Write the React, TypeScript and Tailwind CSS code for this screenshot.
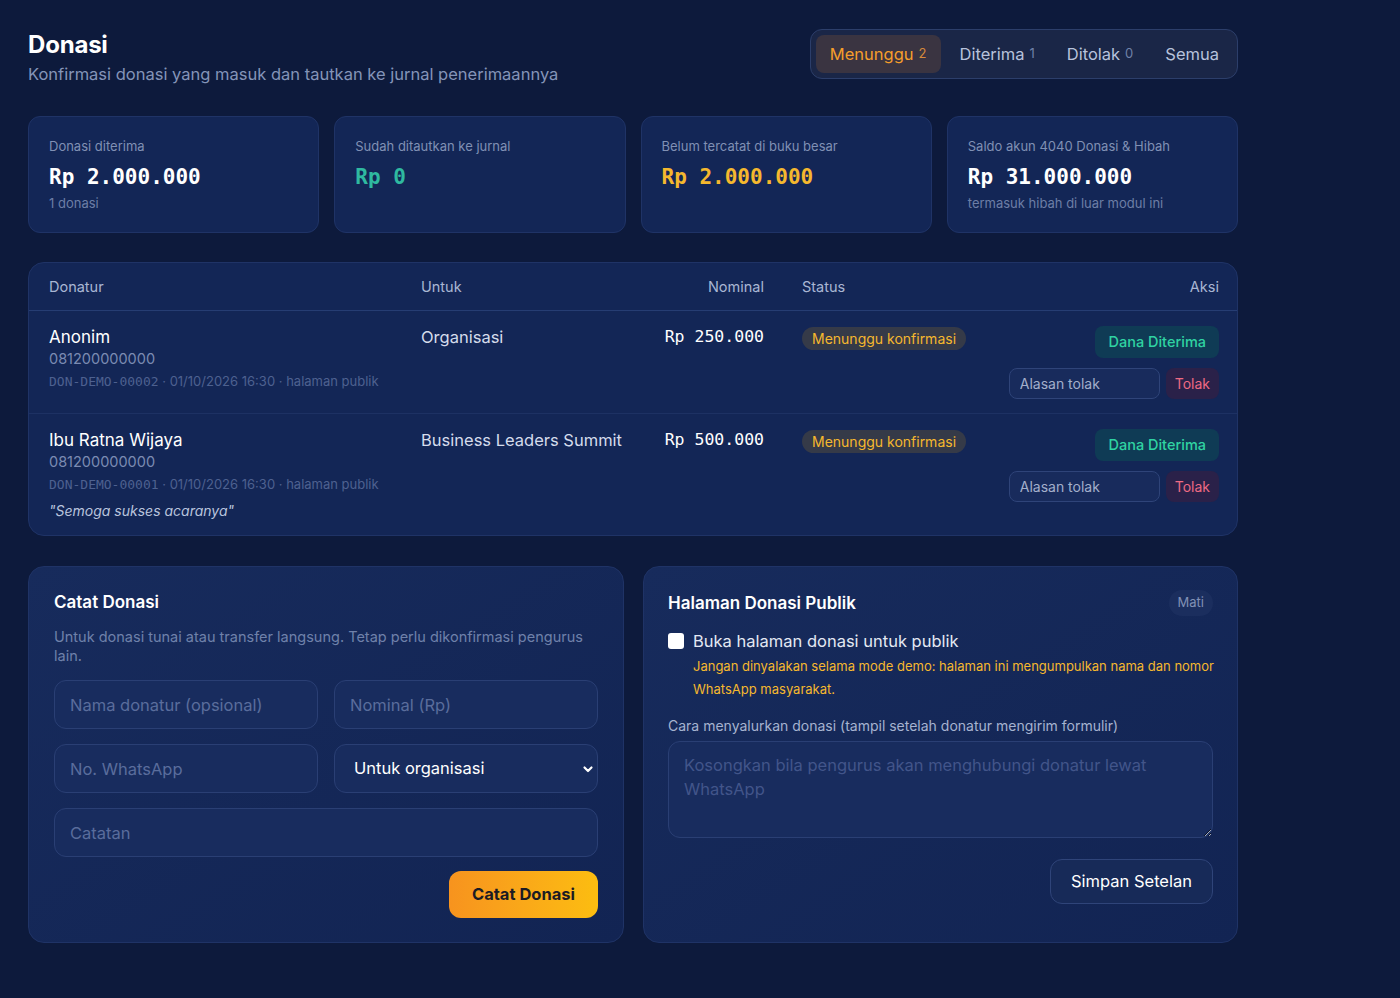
import React from "react";

const sans = { fontFamily: "Inter, 'Noto Sans', sans-serif" };
const mono = "font-['DejaVu_Sans_Mono',monospace]";

const tabs = [
  { label: "Menunggu", count: "2", active: true },
  { label: "Diterima", count: "1" },
  { label: "Ditolak", count: "0" },
  { label: "Semua", count: "" },
];

const stats = [
  { label: "Donasi diterima", value: "Rp 2.000.000", color: "text-white", sub: "1 donasi" },
  { label: "Sudah ditautkan ke jurnal", value: "Rp 0", color: "text-[#2fb9a0]", sub: "" },
  { label: "Belum tercatat di buku besar", value: "Rp 2.000.000", color: "text-[#f5b82e]", sub: "" },
  { label: "Saldo akun 4040 Donasi & Hibah", value: "Rp 31.000.000", color: "text-white", sub: "termasuk hibah di luar modul ini" },
];

const rows = [
  { name: "Anonim", phone: "081200000000", id: "DON-DEMO-00002", untuk: "Organisasi", nominal: "Rp 250.000", note: "" },
  { name: "Ibu Ratna Wijaya", phone: "081200000000", id: "DON-DEMO-00001", untuk: "Business Leaders Summit", nominal: "Rp 500.000", note: "\"Semoga sukses acaranya\"" },
];

const gridCols = "grid grid-cols-[372px_243px_140px_207px_248px]";

const inputCls =
  "h-[49px] w-full rounded-xl border border-[#2a3f74] bg-[#182c5e] px-[15px] text-[16.5px] text-white placeholder:text-[#5a6d9c] outline-none";

export default function App() {
  return (
    <div style={sans} className="min-h-[998px] bg-[#0d1a3c] px-[28px] pt-[29px] pb-10 text-white">
      <div className="w-[1210px]">
        {/* header */}
        <div className="flex items-start justify-between">
          <div className="pt-[1px]">
            <h1 className="text-[24px] font-bold leading-[30px] tracking-[-0.2px]">Donasi</h1>
            <p className="mt-[2px] text-[16.5px] leading-[24px] text-[#8494b8]">
              Konfirmasi donasi yang masuk dan tautkan ke jurnal penerimaannya
            </p>
          </div>
          <div className="flex h-[50px] items-center gap-[6px] rounded-xl border border-[#2c3e6a] bg-[#1a2647] px-[5px]">
            {tabs.map((t) => (
              <div
                key={t.label}
                className={
                  t.active
                    ? "flex h-[38px] items-center rounded-lg bg-[#3a3441] px-[14px] text-[16.5px] text-[#f59e2b]"
                    : "flex h-[38px] items-center px-[13px] text-[16.5px] text-[#b7c2dc]"
                }
              >
                {t.label}
                {t.count && (
                  <span className={t.active ? "ml-[5px] text-[13px] text-[#d68a3a]" : "ml-[5px] text-[13px] text-[#7081a8]"}>
                    {t.count}
                  </span>
                )}
              </div>
            ))}
          </div>
        </div>

        {/* stats */}
        <div className="mt-[30px] grid grid-cols-4 gap-[15px]">
          {stats.map((s) => (
            <div key={s.label} className="h-[117px] rounded-xl border border-[#1f3366] bg-[#132656] px-[20px] pt-[20px]">
              <div className="text-[13px] leading-[18px] text-[#8090b4]">{s.label}</div>
              <div className={`mt-[7px] text-[21px] font-bold leading-[30px] ${mono} ${s.color}`}>{s.value}</div>
              {s.sub && <div className="mt-[2px] text-[13px] leading-[18px] text-[#6d7ea6]">{s.sub}</div>}
            </div>
          ))}
        </div>

        {/* table */}
        <div className="mt-[29px] overflow-hidden rounded-2xl border border-[#1f3366] bg-[#132656]">
          <div className={`${gridCols} h-[48px] items-center border-b border-[#263d73] text-[14.5px] text-[#a9b6d3]`}>
            <div className="px-5">Donatur</div>
            <div className="px-5">Untuk</div>
            <div className="px-5 text-right">Nominal</div>
            <div className="pl-[18px] pr-5">Status</div>
            <div className="px-5 text-right">Aksi</div>
          </div>
          {rows.map((r, i) => (
            <div key={r.id} className={`${gridCols} py-[14px] ${i === 0 ? "border-b border-[#1d3163]" : ""}`}>
              <div className="px-5">
                <div className="text-[17px] leading-[24px] text-white">{r.name}</div>
                <div className="text-[14.5px] leading-[20px] text-[#7b8bb2]">{r.phone}</div>
                <div className="mt-[2px] text-[13px] leading-[20px] text-[#4e6190]">
                  <span className={mono}>{r.id}</span> · 01/10/2026 16:30 · halaman publik
                </div>
                {r.note && <div className="mt-[6px] text-[14px] italic leading-[20px] text-[#b9c4dd]">{r.note}</div>}
              </div>
              <div className="whitespace-nowrap pl-5 text-[16.5px] leading-[24px] text-[#d5dcec]">{r.untuk}</div>
              <div className={`px-5 text-right text-[16.5px] leading-[24px] text-white ${mono}`}>{r.nominal}</div>
              <div className="pl-[18px] pr-5 pt-[1px]">
                <span className="inline-flex h-[23px] items-center rounded-full bg-[#353a48] px-[10px] text-[14px] text-[#f5b82e]">
                  Menunggu konfirmasi
                </span>
              </div>
              <div className="flex flex-col items-end px-5 pt-[1px]">
                <button className="h-[32px] rounded-lg bg-[#0f3b55] px-[13px] text-[14.5px] font-medium text-[#2fd3a2]">
                  Dana Diterima
                </button>
                <div className="mt-[10px] flex gap-[6px]">
                  <input
                    placeholder="Alasan tolak"
                    className="h-[31px] w-[151px] rounded-lg border border-[#2f4479] bg-[#182b5c] px-[10px] text-[14px] text-white placeholder:text-[#a3afcb] outline-none"
                  />
                  <button className="h-[31px] rounded-lg bg-[#2a2149] px-[9px] text-[14px] text-[#ee6a83]">Tolak</button>
                </div>
              </div>
            </div>
          ))}
        </div>

        {/* bottom cards */}
        <div className="mt-[30px] grid grid-cols-[596px_595px] gap-[19px]">
          <div className="h-[377px] rounded-2xl border border-[#1f3366] bg-gradient-to-br from-[#172b5c] to-[#122453] px-[25px] pt-[23px]">
            <h2 className="text-[17px] font-semibold leading-[24px]">Catat Donasi</h2>
            <p className="mt-[13px] text-[14.5px] leading-[19px] text-[#6f81aa]">
              Untuk donasi tunai atau transfer langsung. Tetap perlu dikonfirmasi pengurus lain.
            </p>
            <div className="mt-[15px] grid grid-cols-2 gap-x-[16px] gap-y-[15px]">
              <input placeholder="Nama donatur (opsional)" className={inputCls} />
              <input placeholder="Nominal (Rp)" className={inputCls} />
              <input placeholder="No. WhatsApp" className={inputCls} />
              <div className="relative">
                <select className={`${inputCls} appearance-none pl-[19px]`} defaultValue="org">
                  <option value="org">Untuk organisasi</option>
                </select>
                <svg
                  className="pointer-events-none absolute right-[4px] top-1/2 -translate-y-1/2"
                  width="12"
                  height="12"
                  viewBox="0 0 12 12"
                  fill="none"
                  stroke="white"
                  strokeWidth="2.2"
                  strokeLinecap="round"
                  strokeLinejoin="round"
                >
                  <path d="M2.5 4.5 6 8l3.5-3.5" />
                </svg>
              </div>
              <input placeholder="Catatan" className={`${inputCls} col-span-2`} />
            </div>
            <div className="mt-[14px] flex justify-end">
              <button className="h-[47px] rounded-xl bg-gradient-to-r from-[#f7931e] to-[#fcbd10] px-[23px] text-[16.5px] font-bold text-[#1b1b24]">
                Catat Donasi
              </button>
            </div>
          </div>

          <div className="h-[377px] rounded-2xl border border-[#1f3366] bg-gradient-to-br from-[#172b5c] to-[#122453] px-[24px] pt-[23px]">
            <div className="flex items-center justify-between">
              <h2 className="text-[17px] font-semibold leading-[24px]">Halaman Donasi Publik</h2>
              <span className="rounded-full bg-[#1b2e5e] px-[9px] py-[3px] text-[13px] text-[#8191b5]">Mati</span>
            </div>
            <label className="mt-[13px] flex items-center gap-[9px]">
              <span className="h-[16px] w-[16px] rounded-[3px] bg-white" />
              <span className="text-[16.5px] leading-[24px] text-[#e3e8f3]">Buka halaman donasi untuk publik</span>
            </label>
            <p className="mr-[-8px] mt-[2px] pl-[25px] text-[13px] leading-[23px] text-[#f5b82e]">
              Jangan dinyalakan selama mode demo: halaman ini mengumpulkan nama dan nomor WhatsApp masyarakat.
            </p>
            <div className="mt-[14px] text-[14px] leading-[22px] text-[#a6b3d0]">
              Cara menyalurkan donasi (tampil setelah donatur mengirim formulir)
            </div>
            <textarea
              placeholder="Kosongkan bila pengurus akan menghubungi donatur lewat WhatsApp"
              className="mt-[4px] h-[97px] w-full rounded-xl border border-[#2a3f74] bg-[#182c5e] px-[15px] py-[11px] text-[16.5px] leading-[24px] text-white placeholder:text-[#42558a] outline-none"
            />
            <div className="mt-[15px] flex justify-end">
              <button className="h-[45px] rounded-xl border border-[#2f4479] bg-[#172a58] px-[20px] text-[16.5px] text-white">
                Simpan Setelan
              </button>
            </div>
          </div>
        </div>
      </div>
    </div>
  );
}
